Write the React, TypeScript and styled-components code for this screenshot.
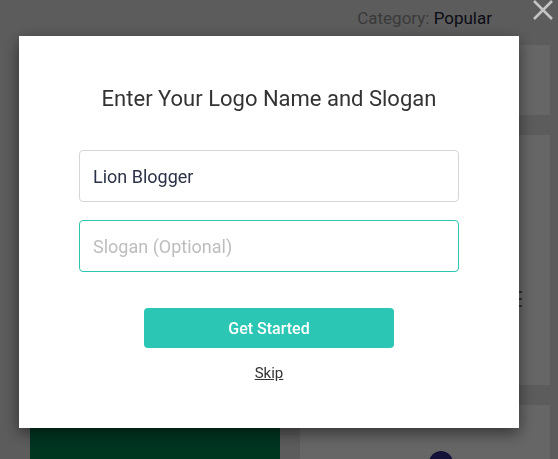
import React from "react";
import styled, { createGlobalStyle } from "styled-components";

const GlobalStyle = createGlobalStyle`
  html, body {
    margin: 0;
    padding: 0;
  }
  body {
    font-family: Roboto, "Liberation Sans", Arial, sans-serif;
    background: #e6e6e6;
    overflow: hidden;
  }
  * {
    box-sizing: border-box;
  }
`;

/* the page that sits behind the dialog */
const Page = styled.div`
  height: 100vh;
  overflow: hidden;
  background: #e6e6e6;
`;

const TopBar = styled.div`
  height: 36px;
  display: flex;
  justify-content: flex-end;
  align-items: center;
  padding-right: 66px;
  font-size: 17px;
  color: #919191;
  span {
    color: #22213a;
  }
`;

const CardGrid = styled.div`
  display: grid;
  grid-template-columns: 250px 250px;
  grid-template-rows: 70px 250px 54px;
  column-gap: 20px;
  row-gap: 20px;
  padding: 9px 8px 0 30px;
`;

const Card = styled.div<{ $bg?: string }>`
  background: ${(p) => p.$bg || "#fff"};
  display: flex;
`;

const MenuCard = styled(Card)`
  justify-content: flex-end;
  padding: 156px 28px 0 0;
`;

const Burger = styled.div`
  display: flex;
  flex-direction: column;
  gap: 5px;
  span {
    display: block;
    width: 14px;
    height: 2px;
    background: #7a7a7a;
  }
`;

const DotCard = styled(Card)`
  padding: 46px 0 0 129px;
`;

const Dot = styled.div`
  width: 24px;
  height: 24px;
  border-radius: 50%;
  background: #322e90;
`;

/* dialog */
const Overlay = styled.div`
  position: fixed;
  inset: 0;
  background: rgba(0, 0, 0, 0.6);
  padding: 36px 0 0 19px;
`;

const CloseButton = styled.button`
  position: absolute;
  top: -2px;
  right: 3px;
  width: 24px;
  height: 24px;
  padding: 0;
  border: none;
  background: none;
  color: #c4c4c4;
  cursor: pointer;
`;

const Modal = styled.div`
  width: 500px;
  height: 392px;
  background: #fff;
  box-shadow: 0 5px 15px rgba(0, 0, 0, 0.5);
  display: flex;
  flex-direction: column;
  align-items: center;
  padding-top: 50px;
`;

const Title = styled.h2`
  margin: 0 0 38px;
  font-size: 22px;
  line-height: 26px;
  font-weight: 400;
  color: #333;
`;

const Field = styled.input<{ $focused?: boolean }>`
  width: 380px;
  height: 52px;
  margin-bottom: 18px;
  padding: 0 13px;
  border: 1px solid ${(p) => (p.$focused ? "#2ec4b0" : "#d6d6da")};
  border-radius: 4px;
  outline: none;
  font-family: Roboto, "Liberation Sans", Arial, sans-serif;
  font-size: 18px;
  color: #2c3349;
  caret-color: #2c3345;
  &::placeholder {
    color: #bdbdbd;
  }
`;

const StartButton = styled.button`
  width: 250px;
  height: 40px;
  margin-top: 18px;
  border: none;
  border-radius: 4px;
  background: #2bc6b4;
  color: #fff;
  font-family: Roboto, "Liberation Sans", Arial, sans-serif;
  font-size: 16px;
  font-weight: 500;
  cursor: pointer;
`;

const SkipLink = styled.a`
  margin-top: 16px;
  font-size: 15px;
  line-height: 18px;
  color: #333;
  text-decoration: underline;
  cursor: pointer;
`;

const CloseIcon = () => (
  <svg width="24" height="24" viewBox="0 0 24 24">
    <path
      d="M3 3 L21 21 M21 3 L3 21"
      stroke="currentColor"
      strokeWidth="2.6"
      fill="none"
    />
  </svg>
);

export default function App() {
  return (
    <>
      <GlobalStyle />
      <Page>
        <TopBar>
          Category:&nbsp;<span>Popular</span>
        </TopBar>
        <CardGrid>
          <Card />
          <Card />
          <Card />
          <MenuCard>
            <Burger>
              <span />
              <span />
              <span />
            </Burger>
          </MenuCard>
          <Card $bg="#008552" />
          <DotCard>
            <Dot />
          </DotCard>
        </CardGrid>
      </Page>
      <Overlay>
        <CloseButton aria-label="Close">
          <CloseIcon />
        </CloseButton>
        <Modal>
          <Title>Enter Your Logo Name and Slogan</Title>
          <Field defaultValue="Lion Blogger" />
          <Field $focused placeholder="Slogan (Optional)" autoFocus />
          <StartButton>Get Started</StartButton>
          <SkipLink>Skip</SkipLink>
        </Modal>
      </Overlay>
    </>
  );
}
